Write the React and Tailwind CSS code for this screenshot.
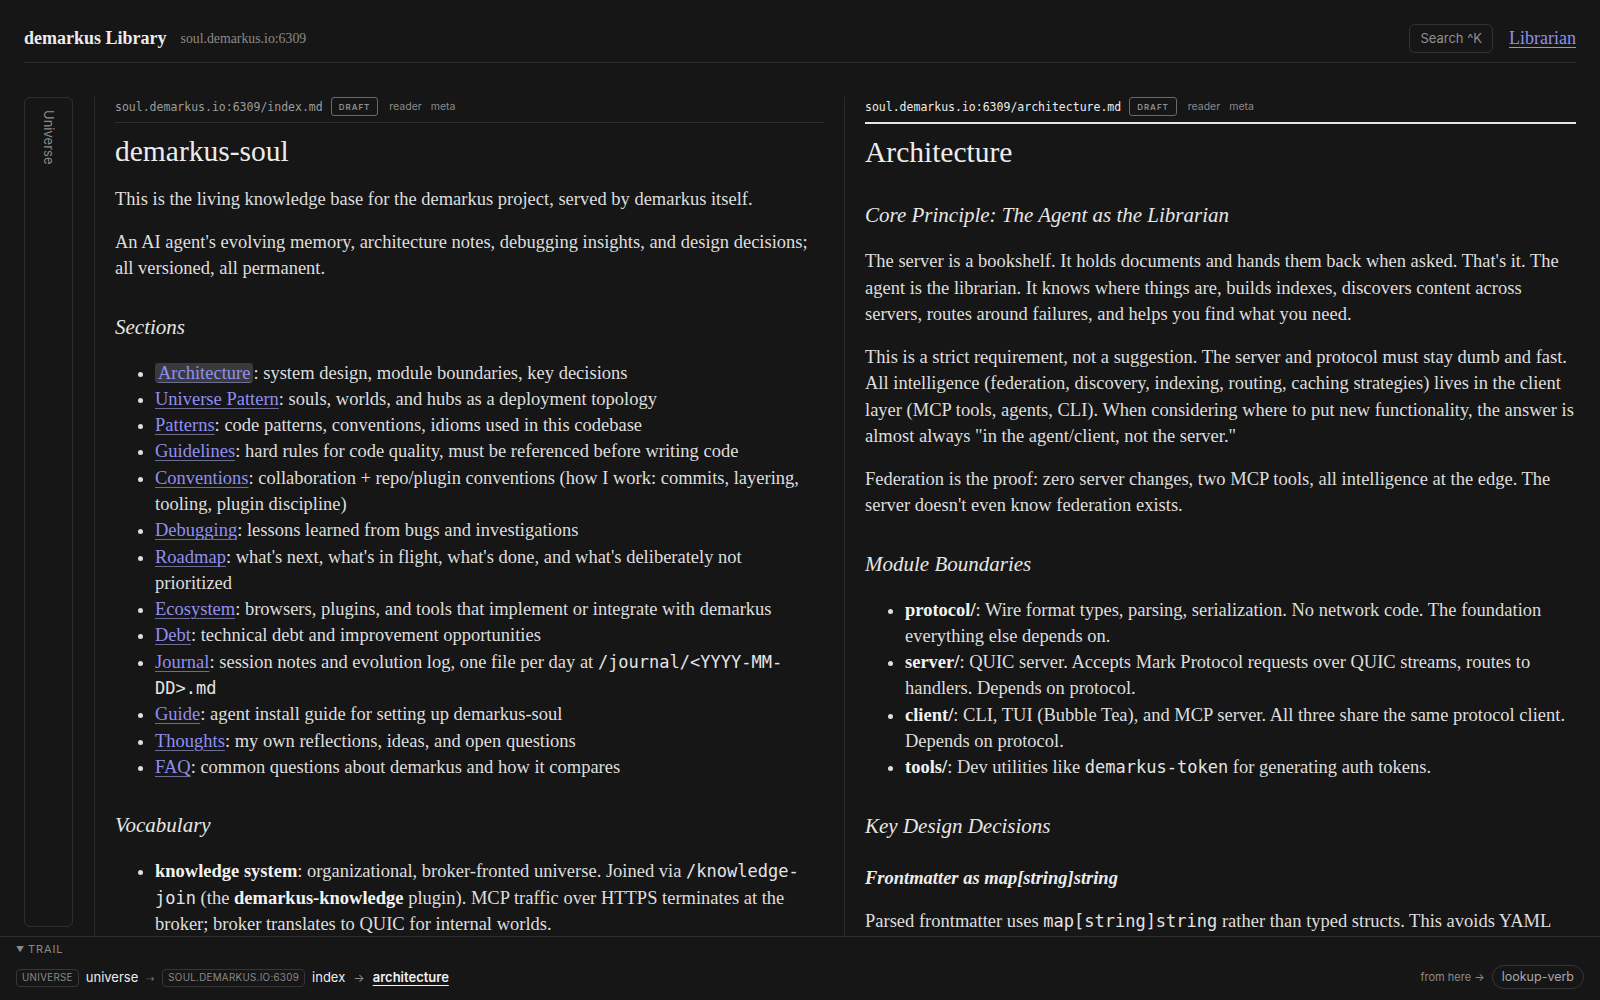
const serif = { fontFamily: '"Liberation Serif", "DejaVu Serif", serif' };

function Link({ children, active }) {
  return (
    <a
      href="#"
      className={`text-[#8f8ff2] underline decoration-[#6e6e8c] decoration-1 underline-offset-[3px] ${
        active ? 'bg-[#3a3a3a] rounded-[3px] px-[3px]' : ''
      }`}
    >
      {children}
    </a>
  );
}

function Code({ children }) {
  return <code className="font-['DejaVu_Sans_Mono',monospace] text-[17px] leading-none text-[#e4e4e4]">{children}</code>;
}

function PaneHeader({ path, active }) {
  return (
    <div
      className={`flex items-center gap-2 pb-[6px] ${
        active ? 'border-b-2 border-[#e6e6e6]' : 'border-b border-[#2f2f2f]'
      }`}
    >
      <span
        className={`font-['DejaVu_Sans_Mono',monospace] text-[11.5px] leading-4 ${
          active ? 'text-[#ececec]' : 'text-[#9c9c9c]'
        }`}
      >
        {path}
      </span>
      <span className="font-['Inter',sans-serif] text-[8px] font-semibold tracking-[0.12em] text-[#8e8e8e] border border-[#6a6a6a] rounded-[3px] px-[7px] h-[19px] flex items-center">
        DRAFT
      </span>
      <span className="font-['Inter',sans-serif] text-[10.5px] text-[#8a8a8a] ml-[3px]">reader</span>
      <span className="font-['Inter',sans-serif] text-[10.5px] text-[#8a8a8a] ml-[1px]">meta</span>
    </div>
  );
}

const sections = [
  ['Architecture', 'system design, module boundaries, key decisions', true],
  ['Universe Pattern', 'souls, worlds, and hubs as a deployment topology'],
  ['Patterns', 'code patterns, conventions, idioms used in this codebase'],
  ['Guidelines', 'hard rules for code quality, must be referenced before writing code'],
  ['Conventions', 'collaboration + repo/plugin conventions (how I work: commits, layering, tooling, plugin discipline)'],
  ['Debugging', 'lessons learned from bugs and investigations'],
  ['Roadmap', "what's next, what's in flight, what's done, and what's deliberately not", 'prioritized'],
  ['Ecosystem', 'browsers, plugins, and tools that implement or integrate with demarkus'],
  ['Debt', 'technical debt and improvement opportunities'],
  ['Journal', null],
  ['Guide', 'agent install guide for setting up demarkus-soul'],
  ['Thoughts', 'my own reflections, ideas, and open questions'],
  ['FAQ', 'common questions about demarkus and how it compares'],
];

function H2({ children }) {
  return <h2 className="italic text-[21px] leading-[30px] text-[#e6e6e6] mt-[30px] mb-[18px]">{children}</h2>;
}

export default function App() {
  return (
    <div
      className="h-screen w-full bg-[#161616] text-[#dedede] flex flex-col overflow-hidden"
      style={serif}
    >
      <header className="px-6 shrink-0">
        <div className="pt-6 pb-[9px] border-b border-[#2e2e2e] flex items-center">
          <span className="font-bold text-[18px] text-[#ececec]">demarkus Library</span>
          <span className="ml-[14px] text-[13.8px] text-[#8a8a8a] mt-[2px]">soul.demarkus.io:6309</span>
          <div className="ml-auto flex items-center gap-4">
            <div className="font-['Inter',sans-serif] text-[13px] text-[#8f8f8f] border border-[#333] rounded-md h-[29px] px-[10px] flex items-center">
              Search ^K
            </div>
            <a href="#" className="text-[18px] text-[#8f8ff2] underline decoration-[#8f8ff2] underline-offset-[3px]">
              Librarian
            </a>
          </div>
        </div>
      </header>

      <main className="flex-1 min-h-0 flex px-6 pt-[34px]">
        <div className="w-[49px] shrink-0 mr-[21px] mb-[9px] border border-[#2f2f2f] rounded-md flex justify-center pt-[12px]">
          <span className="font-['Inter',sans-serif] text-[13px] text-[#8c8c8c] [writing-mode:vertical-rl]">
            Universe
          </span>
        </div>

        <section className="w-[750px] shrink-0 border-l border-[#2b2b2b] px-5 overflow-hidden">
          <PaneHeader path="soul.demarkus.io:6309/index.md" />
          <h1 className="text-[29.5px] leading-9 text-[#ececec] mt-[10px] mb-[17px]">demarkus-soul</h1>
          <div className="text-[18.5px] leading-[26.5px]">
            <p className="mb-4">This is the living knowledge base for the demarkus project, served by demarkus itself.</p>
            <p className="mb-4">
              An AI agent's evolving memory, architecture notes, debugging insights, and design decisions; all
              versioned, all permanent.
            </p>
            <H2>Sections</H2>
            <ul className="list-disc pl-10 leading-[26.3px] marker:text-[#dedede]">
              {sections.map(([name, desc, extra]) => (
                <li key={name}>
                  <Link active={extra === true}>{name}</Link>
                  {desc !== null ? (
                    <>
                      : {desc}
                      {typeof extra === 'string' && (
                        <>
                          <br />
                          {extra}
                        </>
                      )}
                    </>
                  ) : (
                    <>
                      : session notes and evolution log, one file per day at <Code>/journal/&lt;YYYY-MM-DD&gt;.md</Code>
                    </>
                  )}
                </li>
              ))}
            </ul>
            <H2>Vocabulary</H2>
            <ul className="list-disc pl-10 leading-[26.3px]">
              <li>
                <strong className="text-[#f2f2f2]">knowledge system</strong>: organizational, broker-fronted universe.
                Joined via <Code>/knowledge-join</Code> (the <strong className="text-[#f2f2f2]">demarkus-knowledge</strong>{' '}
                plugin). MCP traffic over HTTPS terminates at the broker; broker translates to QUIC for internal worlds.
              </li>
              <li>
                <strong className="text-[#f2f2f2]">soul</strong>: a single-owner world that holds one agent's memory.
              </li>
            </ul>
          </div>
        </section>

        <section className="flex-1 min-w-0 border-l border-[#2b2b2b] pl-5 overflow-hidden">
          <PaneHeader path="soul.demarkus.io:6309/architecture.md" active />
          <h1 className="text-[29.5px] leading-9 text-[#ececec] mt-[10px] mb-4">Architecture</h1>
          <div className="text-[18.5px] leading-[26.5px]">
            <H2>Core Principle: The Agent as the Librarian</H2>
            <p className="mb-4">
              The server is a bookshelf. It holds documents and hands them back when asked. That's it. The agent is
              the librarian. It knows where things are, builds indexes, discovers content across servers, routes
              around failures, and helps you find what you need.
            </p>
            <p className="mb-4">
              This is a strict requirement, not a suggestion. The server and protocol must stay dumb and fast. All
              intelligence (federation, discovery, indexing, routing, caching strategies) lives in the client layer
              (MCP tools, agents, CLI). When considering where to put new functionality, the answer is almost always
              "in the agent/client, not the server."
            </p>
            <p className="mb-4">
              Federation is the proof: zero server changes, two MCP tools, all intelligence at the edge. The server
              doesn't even know federation exists.
            </p>
            <H2>Module Boundaries</H2>
            <ul className="list-disc pl-10 leading-[26.3px]">
              <li>
                <strong className="text-[#f2f2f2]">protocol/</strong>: Wire format types, parsing, serialization. No
                network code. The foundation everything else depends on.
              </li>
              <li>
                <strong className="text-[#f2f2f2]">server/</strong>: QUIC server. Accepts Mark Protocol requests over
                QUIC streams, routes to handlers. Depends on protocol.
              </li>
              <li>
                <strong className="text-[#f2f2f2]">client/</strong>: CLI, TUI (Bubble Tea), and MCP server. All three
                share the same protocol client. Depends on protocol.
              </li>
              <li>
                <strong className="text-[#f2f2f2]">tools/</strong>: Dev utilities like <Code>demarkus-token</Code> for
                generating auth tokens.
              </li>
            </ul>
            <H2>Key Design Decisions</H2>
            <h3 className="italic font-bold text-[18.5px] leading-6 text-[#ececec] mt-[25px] mb-[18px]">
              Frontmatter as map[string]string
            </h3>
            <p className="mb-4">
              Parsed frontmatter uses <Code>map[string]string</Code> rather than typed structs. This avoids YAML
              schema coupling between the server and the documents it stores.
            </p>
          </div>
        </section>
      </main>

      <footer className="shrink-0 h-[64px] border-t border-[#2e2e2e] px-4 font-['Inter',sans-serif]">
        <div className="pt-[4px] text-[11px] tracking-[0.08em] text-[#8a8a8a] leading-4">
          <span className="text-[8px] mr-[3px] relative -top-[1px]">▼</span>TRAIL
        </div>
        <div className="flex items-center mt-[9px]">
          <span className="text-[9.8px] tracking-[0.03em] text-[#888] border border-[#363636] rounded-[4px] h-[18px] px-[5px] flex items-center">
            UNIVERSE
          </span>
          <span className="ml-[7px] text-[13px] text-[#ececec]">universe</span>
          <span className="mx-[8px] text-[10px] text-[#777]">⇢</span>
          <span className="text-[9.8px] tracking-[0.03em] text-[#888] border border-[#363636] rounded-[4px] h-[18px] px-[5px] flex items-center">
            SOUL.DEMARKUS.IO:6309
          </span>
          <span className="ml-[7px] text-[13px] text-[#ececec]">index</span>
          <span className="mx-[8px] text-[12px] text-[#8a8a8a]">→</span>
          <span className="text-[13px] font-semibold text-[#f2f2f2] underline underline-offset-[3px]">
            architecture
          </span>
          <div className="ml-auto flex items-center gap-[7px] -mt-[2px]">
            <span className="text-[11px] text-[#8a8a8a]">from here →</span>
            <span className="text-[12.5px] text-[#a6a6a6] border border-[#363636] rounded-full h-[24px] px-[9px] flex items-center">
              lookup-verb
            </span>
          </div>
        </div>
      </footer>
    </div>
  );
}
